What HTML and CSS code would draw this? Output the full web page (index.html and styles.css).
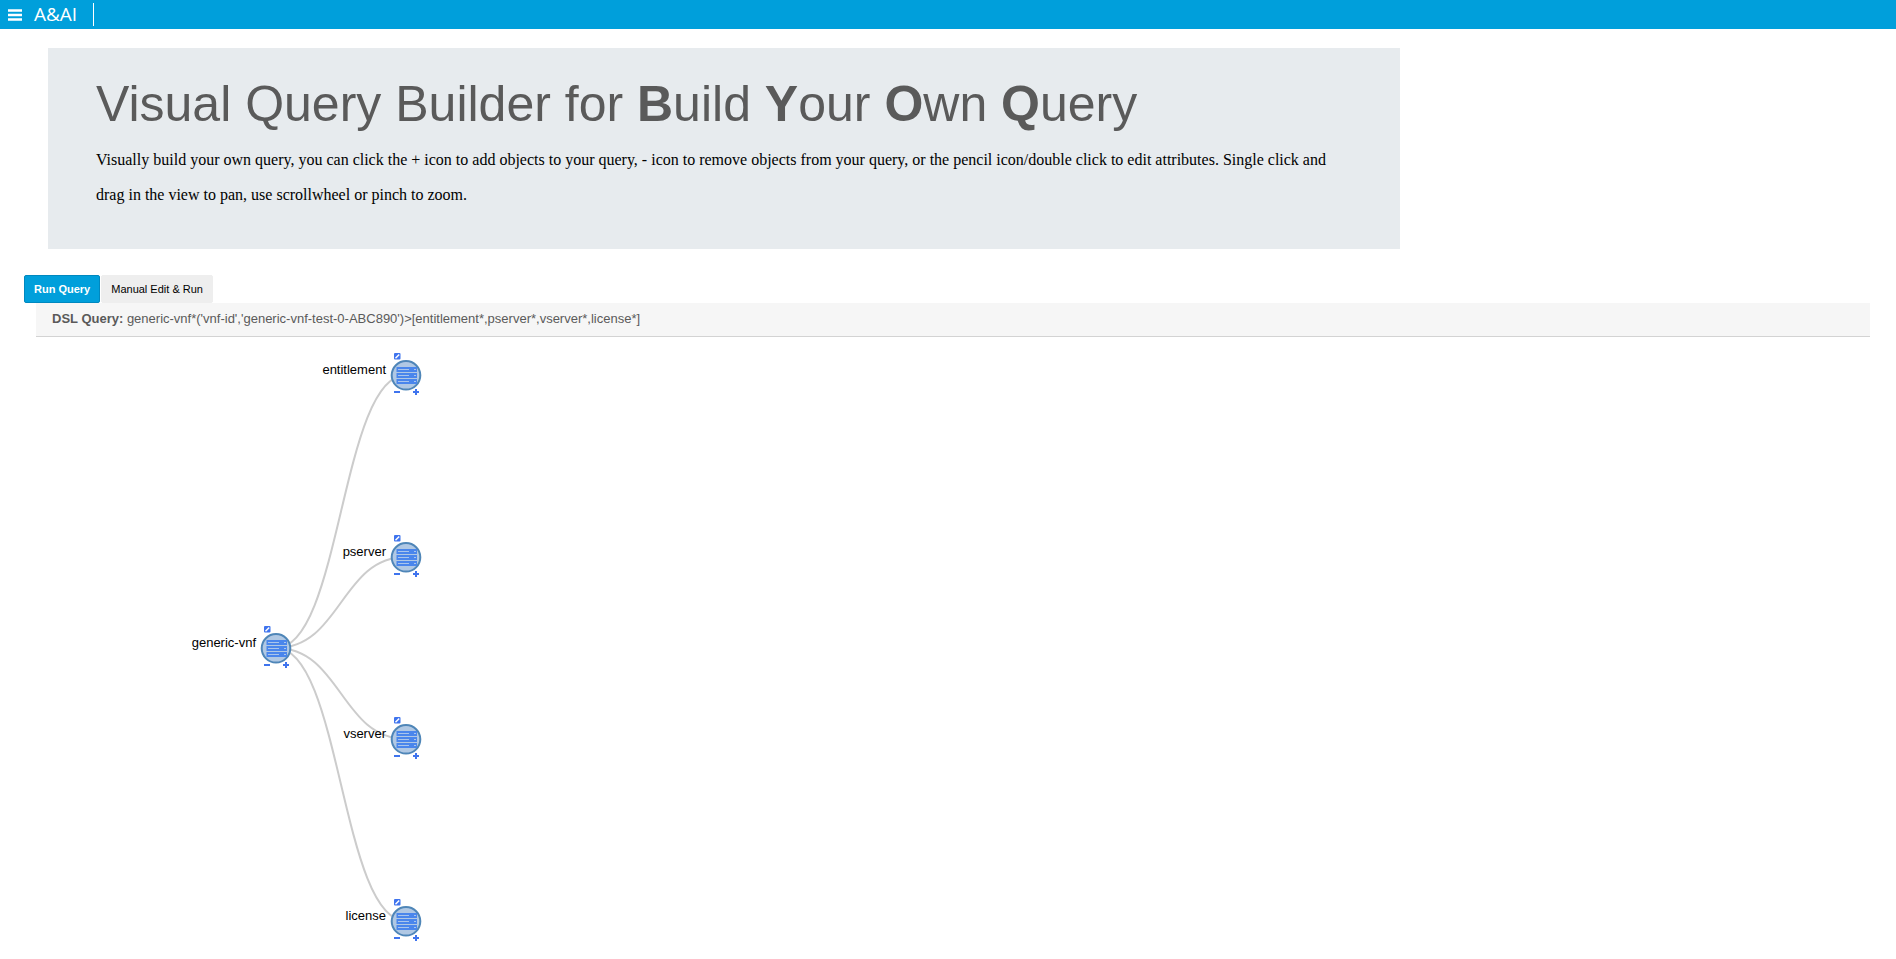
FILE: index.html
```html
<!DOCTYPE html>
<html lang="en">
<head>
<meta charset="utf-8">
<title>A&amp;AI</title>
<link rel="stylesheet" href="styles.css">
</head>
<body>
<svg class="sprite" aria-hidden="true">
  <symbol id="server" viewBox="0 0 32 32">
    <circle cx="16" cy="16.300" r="14.300" fill="#b0c8e4" stroke="#4f86b8" stroke-width="2"/>
    <g fill="#4a86ec">
      <rect x="6.500" y="8" width="20.500" height="5"/>
      <rect x="6.500" y="14" width="20.500" height="5"/>
      <rect x="6.500" y="20" width="20.500" height="5"/>
    </g>
    <path d="M8 10.500h11M8 16.500h11M8 22.500h11M24 10.500h2M24 16.500h2M24 22.500h2" stroke="#a9c5ec" fill="none"/>
  </symbol>
  <symbol id="edit" viewBox="0 0 8 8">
    <rect x="1" y="1" width="6.500" height="6.500" rx="1" fill="#3f74ee"/>
    <path d="M2.500 6.200l3.700-3.700" stroke="#fff" stroke-width="1.500"/>
  </symbol>
  <symbol id="minus" viewBox="0 0 8 8"><path d="M1 4h6" stroke="#3f74ee" stroke-width="2"/></symbol>
  <symbol id="plus" viewBox="0 0 8 8"><path d="M1 4h6M4 1v6" stroke="#3f74ee" stroke-width="2"/></symbol>
</svg>

<header class="topbar">
  <button class="menu" type="button" aria-label="Menu">
    <svg width="14" height="12" viewBox="0 0 14 12"><path d="M0 1.500h14M0 6h14M0 10.500h14" stroke="#fff" stroke-width="2.400"/></svg>
  </button>
  <span class="brand">A&amp;AI</span>
</header>

<main class="page">
  <section class="intro">
    <h1 class="title">Visual Query Builder for <b>B</b>uild <b>Y</b>our <b>O</b>wn <b>Q</b>uery</h1>
    <p class="lead">Visually build your own query, you can click the + icon to add objects to your query, - icon to remove objects from your query, or the pencil icon/double click to edit attributes. Single click and drag in the view to pan, use scrollwheel or pinch to zoom.</p>
  </section>

  <div class="actions">
    <button class="btn btn-primary" type="button">Run Query</button>
    <button class="btn" type="button">Manual Edit &amp; Run</button>
  </div>

  <div class="query"><b>DSL Query:</b> generic-vnf*('vnf-id','generic-vnf-test-0-ABC890')&gt;[entitlement*,pserver*,vserver*,license*]</div>

  <section class="canvas" aria-label="Query graph">
    <svg class="links" aria-hidden="true">
      <path d="M276 311C341 311 341 38 406 38"/>
      <path d="M276 311C341 311 341 220 406 220"/>
      <path d="M276 311C341 311 341 402 406 402"/>
      <path d="M276 311C341 311 341 584 406 584"/>
    </svg>
    <div class="node node-generic-vnf">
      <span class="label">generic-vnf</span>
      <svg class="disc"><use href="#server"/></svg>
      <button class="tool edit" type="button" aria-label="Edit generic-vnf"><svg><use href="#edit"/></svg></button>
      <button class="tool remove" type="button" aria-label="Remove generic-vnf"><svg><use href="#minus"/></svg></button>
      <button class="tool add" type="button" aria-label="Add to generic-vnf"><svg><use href="#plus"/></svg></button>
    </div>
    <div class="node node-entitlement">
      <span class="label">entitlement</span>
      <svg class="disc"><use href="#server"/></svg>
      <button class="tool edit" type="button" aria-label="Edit entitlement"><svg><use href="#edit"/></svg></button>
      <button class="tool remove" type="button" aria-label="Remove entitlement"><svg><use href="#minus"/></svg></button>
      <button class="tool add" type="button" aria-label="Add to entitlement"><svg><use href="#plus"/></svg></button>
    </div>
    <div class="node node-pserver">
      <span class="label">pserver</span>
      <svg class="disc"><use href="#server"/></svg>
      <button class="tool edit" type="button" aria-label="Edit pserver"><svg><use href="#edit"/></svg></button>
      <button class="tool remove" type="button" aria-label="Remove pserver"><svg><use href="#minus"/></svg></button>
      <button class="tool add" type="button" aria-label="Add to pserver"><svg><use href="#plus"/></svg></button>
    </div>
    <div class="node node-vserver">
      <span class="label">vserver</span>
      <svg class="disc"><use href="#server"/></svg>
      <button class="tool edit" type="button" aria-label="Edit vserver"><svg><use href="#edit"/></svg></button>
      <button class="tool remove" type="button" aria-label="Remove vserver"><svg><use href="#minus"/></svg></button>
      <button class="tool add" type="button" aria-label="Add to vserver"><svg><use href="#plus"/></svg></button>
    </div>
    <div class="node node-license">
      <span class="label">license</span>
      <svg class="disc"><use href="#server"/></svg>
      <button class="tool edit" type="button" aria-label="Edit license"><svg><use href="#edit"/></svg></button>
      <button class="tool remove" type="button" aria-label="Remove license"><svg><use href="#minus"/></svg></button>
      <button class="tool add" type="button" aria-label="Add to license"><svg><use href="#plus"/></svg></button>
    </div>
  </section>
</main>
</body>
</html>
```
FILE: styles.css
```css
* { box-sizing: border-box; }

body {
  margin: 0;
  min-height: 100vh;
  display: flex;
  flex-direction: column;
  background: #fff;
  color: #000;
  font-family: "Liberation Sans", Arial, sans-serif;
}

button { font-family: inherit; cursor: pointer; }

.sprite { display: none; }

.topbar {
  display: flex;
  align-items: center;
  gap: 12px;
  padding: 3px 8px;
  background: #009fdb;
}

.menu {
  display: flex;
  padding: 0;
  border: 0;
  background: none;
}

.brand {
  padding-right: 16px;
  border-right: 1px solid #fff;
  color: #fff;
  font-family: "Open Sans", sans-serif;
  font-size: 19px;
  line-height: 23px;
}

.page {
  flex: 1;
  display: flex;
  flex-direction: column;
}

.intro {
  max-width: 1352px;
  margin: 19px 48px 26px;
  padding: 24px 48px 37px;
  background: #e7ebee;
}

.title {
  margin: 0;
  color: #5a5a5a;
  font-size: 50px;
  font-weight: 400;
  line-height: 64px;
}

.lead {
  margin: 6px 0 0;
  font-family: "Liberation Serif", "Times New Roman", serif;
  font-size: 16px;
  line-height: 35px;
}

.actions {
  display: flex;
  gap: 1px;
  padding: 0 24px;
}

.btn {
  height: 28px;
  padding: 0 9px;
  border: 1px solid #eee;
  border-radius: 2px;
  background: #eee;
  color: #000;
  font-size: 11px;
}

.btn-primary {
  border-color: #0088bf;
  background: #009fdb;
  color: #fff;
  font-weight: 700;
}

.query {
  margin: 0 26px 0 36px;
  padding: 7px 16px 8px;
  border-bottom: 1px solid #d3d3d3;
  background: #f6f6f6;
  color: #5a5a5a;
  font-size: 13px;
  line-height: 18px;
}

.canvas {
  position: relative;
  flex: 1;
  min-height: 620px;
}

.links {
  display: block;
  position: absolute;
  inset: 0;
  width: 100%;
  height: 100%;
  fill: none;
  stroke: #ccc;
  stroke-width: 2;
}

.node {
  position: absolute;
  width: 32px;
  height: 32px;
}

.node-generic-vnf { left: 260px; top: 295px; }
.node-entitlement { left: 390px; top: 22px; }
.node-pserver { left: 390px; top: 204px; }
.node-vserver { left: 390px; top: 386px; }
.node-license { left: 390px; top: 568px; }

.label {
  position: absolute;
  right: 36px;
  top: 3px;
  font-size: 13px;
  line-height: 16px;
  white-space: nowrap;
}

.disc {
  display: block;
  width: 32px;
  height: 32px;
}

.tool {
  position: absolute;
  width: 8px;
  height: 8px;
  padding: 0;
  border: 0;
  background: none;
}

.tool svg {
  display: block;
  width: 8px;
  height: 8px;
}

.edit { left: 3px; top: -7px; }
.remove { left: 3px; top: 29px; }
.add { left: 22px; top: 29px; }
```
